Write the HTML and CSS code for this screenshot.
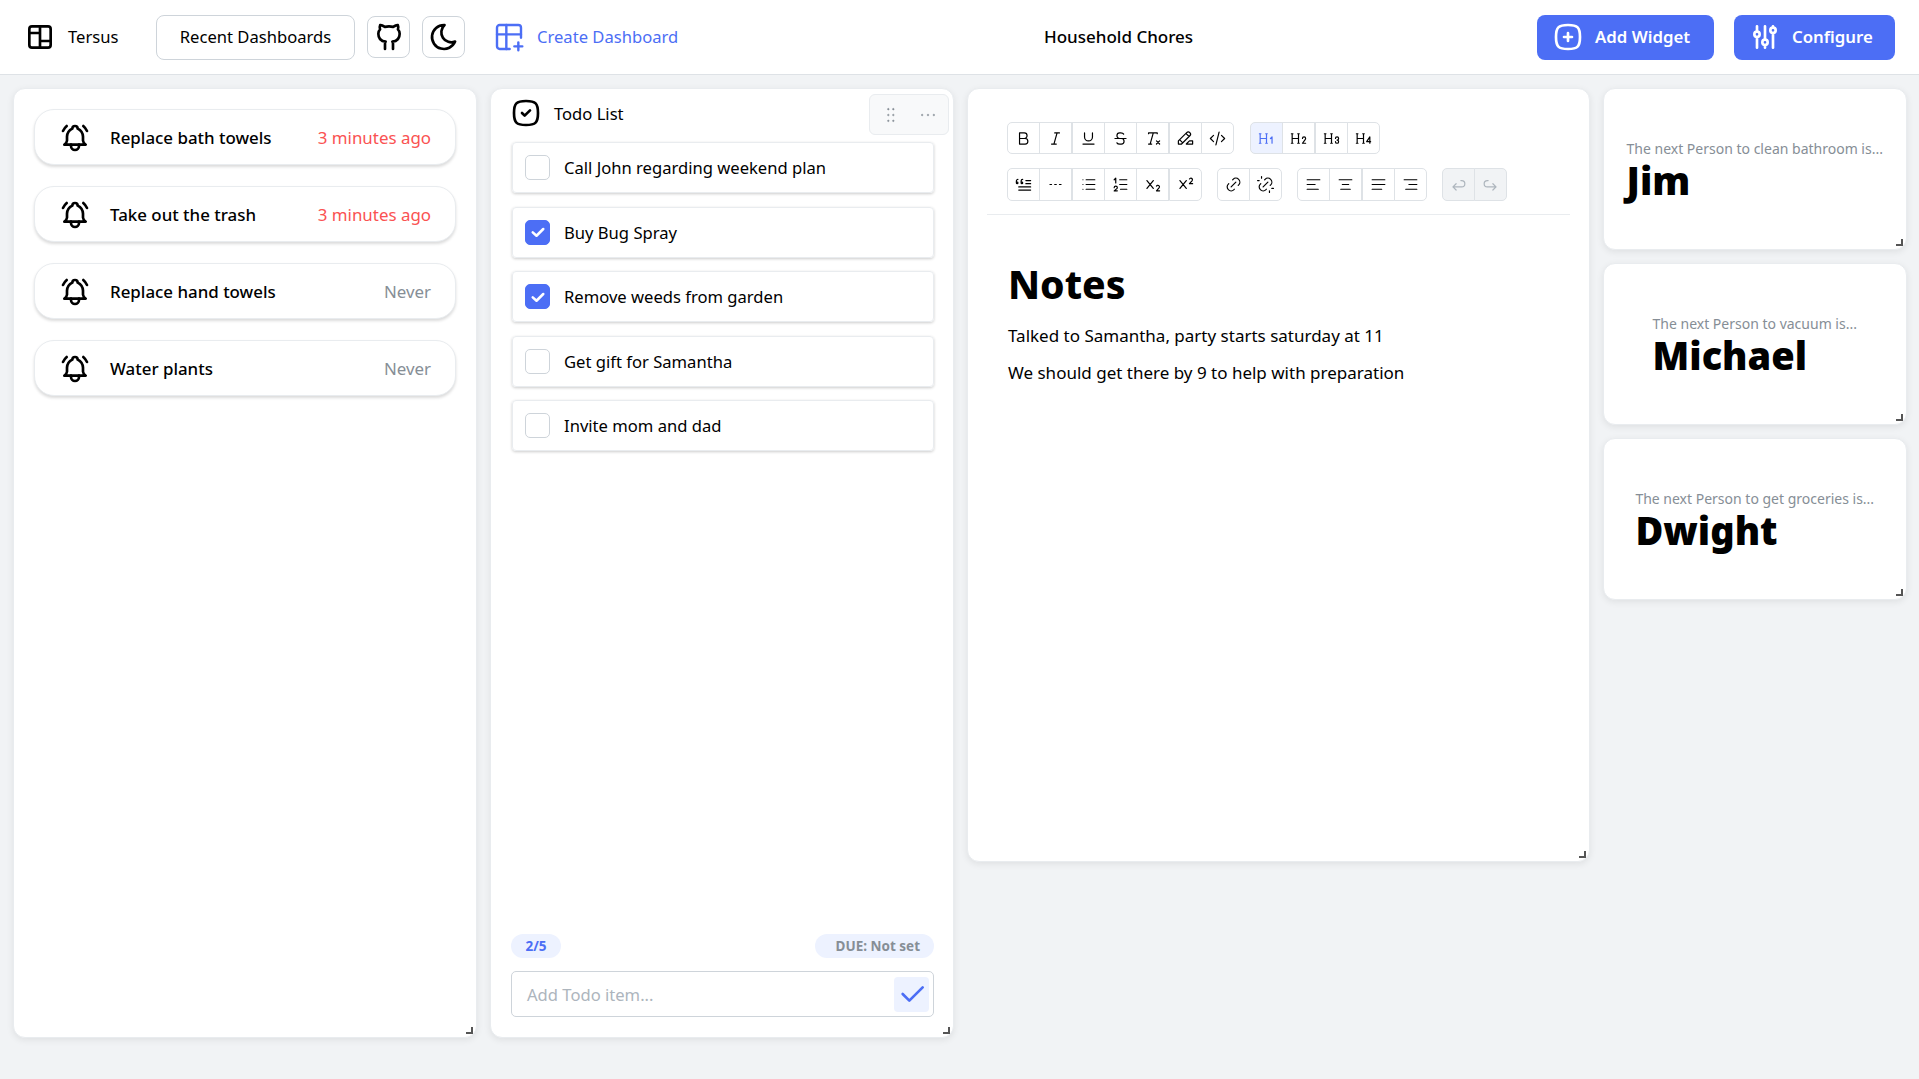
FILE: index.html
```html
<!DOCTYPE html>
<html lang="en">
<head>
<meta charset="utf-8">
<title>Household Chores</title>
<link rel="stylesheet" href="styles.css">
</head>
<body>
<svg class="sprite" aria-hidden="true">
  <defs>
    <symbol id="hrest" viewBox="0 0 24 24"><path d="M4 6v12M12 6v12M11 18h2M3 18h2M4 12h8M3 6h2M11 6h2"/></symbol>
    <symbol id="bell" viewBox="0 0 24 24"><path d="M10 5a2 2 0 0 1 4 0a7 7 0 0 1 4 6v3a4 4 0 0 0 2 3h-16a4 4 0 0 0 2 -3v-3a7 7 0 0 1 4 -6"/><path d="M9 17v1a3 3 0 0 0 6 0v-1"/><path d="M21 6.727a11.05 11.05 0 0 0 -2.794 -3.727"/><path d="M3 6.727a11.05 11.05 0 0 1 2.792 -3.727"/></symbol>
  </defs>
</svg>

<header class="topbar">
  <div class="brand">
    <svg class="ic ic-32" viewBox="0 0 24 24"><path d="M6 4h12a2 2 0 0 1 2 2v12a2 2 0 0 1 -2 2h-12a2 2 0 0 1 -2 -2v-12a2 2 0 0 1 2 -2z"/><path d="M4 9h8M12 15h8M12 4v16"/></svg>
    <span class="lift">Tersus</span>
  </div>
  <button class="btn-outline recent"><span class="lift">Recent Dashboards</span></button>
  <button class="btn-outline square"><svg class="ic ic-32" viewBox="0 0 24 24"><path d="M15 21v-3.5c0 -1 .1 -1.4 -.5 -2c2.8 -.3 5.5 -1.4 5.5 -6a4.6 4.6 0 0 0 -1.3 -3.2a4.2 4.2 0 0 0 -.1 -3.2s-1.1 -.3 -3.5 1.3a12.3 12.3 0 0 0 -6.2 0c-2.4 -1.6 -3.5 -1.3 -3.5 -1.3a4.2 4.2 0 0 0 -.1 3.2a4.6 4.6 0 0 0 -1.3 3.2c0 4.6 2.7 5.7 5.5 6c-.6 .6 -.6 1.2 -.5 2v3.5"/></svg></button>
  <button class="btn-outline square"><svg class="ic ic-32" viewBox="0 0 24 24"><path d="M12 3c.132 0 .263 0 .393 0a7.5 7.5 0 0 0 7.92 12.446a9 9 0 1 1 -8.313 -12.454z"/></svg></button>
  <a class="create">
    <svg class="ic ic-create" viewBox="0 0 24 24"><path d="M12.5 21h-7.5a2 2 0 0 1 -2 -2v-14a2 2 0 0 1 2 -2h14a2 2 0 0 1 2 2v7.5"/><path d="M3 10h18M10 3v18M16 19h6M19 16v6"/></svg>
    <span class="lift">Create Dashboard</span>
  </a>
  <div class="title">Household Chores</div>
  <div class="actions">
    <button class="btn-primary add"><svg class="ic ic-32" viewBox="0 0 24 24"><path d="M9 12h6M12 9v6"/><path d="M12 3c7.2 0 9 1.8 9 9s-1.8 9 -9 9s-9 -1.8 -9 -9s1.8 -9 9 -9z"/></svg><span class="lift">Add Widget</span></button>
    <button class="btn-primary configure"><svg class="ic ic-32" viewBox="0 0 24 24"><path d="M4 10a2 2 0 1 0 4 0a2 2 0 0 0 -4 0M6 4v4M6 12v8M10 16a2 2 0 1 0 4 0a2 2 0 0 0 -4 0M12 4v10M12 18v2M16 7a2 2 0 1 0 4 0a2 2 0 0 0 -4 0M18 4v1M18 9v11"/></svg><span class="lift">Configure</span></button>
  </div>
</header>

<main class="dashboard">
  <section class="panel panel-tall reminders">
    <div class="reminder"><svg class="ic ic-32"><use href="#bell"/></svg><span class="reminder-name">Replace bath towels</span><span class="when when-late">3 minutes ago</span></div>
    <div class="reminder"><svg class="ic ic-32"><use href="#bell"/></svg><span class="reminder-name">Take out the trash</span><span class="when when-late">3 minutes ago</span></div>
    <div class="reminder"><svg class="ic ic-32"><use href="#bell"/></svg><span class="reminder-name">Replace hand towels</span><span class="when">Never</span></div>
    <div class="reminder"><svg class="ic ic-32"><use href="#bell"/></svg><span class="reminder-name">Water plants</span><span class="when">Never</span></div>
    <i class="resize"></i>
  </section>

  <section class="panel panel-tall todo">
    <div class="widget-controls">
      <svg class="dots" viewBox="0 0 24 24"><path d="M9 5a1 1 0 1 0 2 0a1 1 0 1 0 -2 0M9 12a1 1 0 1 0 2 0a1 1 0 1 0 -2 0M9 19a1 1 0 1 0 2 0a1 1 0 1 0 -2 0M15 5a1 1 0 1 0 2 0a1 1 0 1 0 -2 0M15 12a1 1 0 1 0 2 0a1 1 0 1 0 -2 0M15 19a1 1 0 1 0 2 0a1 1 0 1 0 -2 0"/></svg>
      <svg class="dots" viewBox="0 0 24 24"><path d="M4 12a1 1 0 1 0 2 0a1 1 0 1 0 -2 0M11 12a1 1 0 1 0 2 0a1 1 0 1 0 -2 0M18 12a1 1 0 1 0 2 0a1 1 0 1 0 -2 0"/></svg>
    </div>
    <div class="todo-head">
      <svg class="ic ic-32" viewBox="0 0 24 24"><path d="M9 12l2 2l4 -4"/><path d="M12 3c7.2 0 9 1.8 9 9s-1.8 9 -9 9s-9 -1.8 -9 -9s1.8 -9 9 -9z"/></svg>
      <span>Todo List</span>
    </div>
    <ul class="todo-list">
      <li class="todo-item"><span class="check"></span>Call John regarding weekend plan</li>
      <li class="todo-item"><span class="check checked"><svg viewBox="0 0 24 24"><path d="M5 12.5l5 4.5l9 -9"/></svg></span>Buy Bug Spray</li>
      <li class="todo-item"><span class="check checked"><svg viewBox="0 0 24 24"><path d="M5 12.5l5 4.5l9 -9"/></svg></span>Remove weeds from garden</li>
      <li class="todo-item"><span class="check"></span>Get gift for Samantha</li>
      <li class="todo-item"><span class="check"></span>Invite mom and dad</li>
    </ul>
    <div class="todo-meta">
      <span class="badge badge-count">2/5</span>
      <span class="badge badge-due">DUE: Not set</span>
    </div>
    <div class="todo-input">
      <span class="placeholder">Add Todo item...</span>
      <span class="todo-submit"><svg class="ic ic-32" viewBox="0 0 24 24"><path d="M5 12l5 5l10 -10"/></svg></span>
    </div>
    <i class="resize"></i>
  </section>

  <section class="panel panel-notes">
    <div class="toolbar">
      <div class="tool-row">
        <div class="tool-group">
          <span class="tool"><svg class="ic" viewBox="0 0 24 24"><path d="M7 5h6a3.5 3.5 0 0 1 0 7h-6zM13 12h1a3.5 3.5 0 0 1 0 7h-7v-7"/></svg></span>
          <span class="tool"><svg class="ic" viewBox="0 0 24 24"><path d="M11 5l6 0M7 19l6 0M14 5l-4 14"/></svg></span>
          <span class="tool"><svg class="ic" viewBox="0 0 24 24"><path d="M7 5v5a5 5 0 0 0 10 0v-5M5 19h14"/></svg></span>
          <span class="tool"><svg class="ic" viewBox="0 0 24 24"><path d="M5 12l14 0M16 6.5a4 2 0 0 0 -4 -1.5h-1a3.5 3.5 0 0 0 0 7h2a3.5 3.5 0 0 1 0 7h-1.5a4 2 0 0 1 -4 -1.5"/></svg></span>
          <span class="tool"><svg class="ic" viewBox="0 0 24 24"><path d="M17 15l4 4m0 -4l-4 4M7 6v-1h11v1M7 19l4 0M13 5l-4 14"/></svg></span>
          <span class="tool"><svg class="ic" viewBox="0 0 24 24"><path d="M3 19h4l10.5 -10.5a2.828 2.828 0 1 0 -4 -4l-10.5 10.5v4M12.5 5.5l4 4M4.5 13.5l4 4M21 15v4h-8l4 -4z"/></svg></span>
          <span class="tool"><svg class="ic" viewBox="0 0 24 24"><path d="M7 8l-4 4l4 4M17 8l4 4l-4 4M14 4l-4 16"/></svg></span>
        </div>
        <div class="tool-group">
          <span class="tool tool-active"><svg class="ic" viewBox="0 0 24 24"><use href="#hrest"/><path d="M19 18v-8l-2 2"/></svg></span>
          <span class="tool"><svg class="ic" viewBox="0 0 24 24"><use href="#hrest"/><path d="M17 12a2 2 0 1 1 4 0c0 .591 -.417 1.318 -.816 1.858l-3.184 4.143l4 0"/></svg></span>
          <span class="tool"><svg class="ic" viewBox="0 0 24 24"><use href="#hrest"/><path d="M19 14a2 2 0 1 0 -2 -2M17 16a2 2 0 1 0 2 -2"/></svg></span>
          <span class="tool"><svg class="ic" viewBox="0 0 24 24"><use href="#hrest"/><path d="M20 18v-8l-4 6h5"/></svg></span>
        </div>
      </div>
      <div class="tool-row tool-row-tall">
        <div class="tool-group">
          <span class="tool"><svg class="ic" viewBox="0 0 24 24"><path d="M6 15h15M21 19h-15M15 11h6M21 7h-6M9 9h1a1 1 0 1 1 -1 1v-2.5a2 2 0 0 1 2 -2M3 9h1a1 1 0 1 1 -1 1v-2.5a2 2 0 0 1 2 -2"/></svg></span>
          <span class="tool"><svg class="ic" viewBox="0 0 24 24"><path d="M5 12h2M17 12h2M11 12h2"/></svg></span>
          <span class="tool"><svg class="ic" viewBox="0 0 24 24"><path d="M9 6l11 0M9 12l11 0M9 18l11 0M5 6l0 .01M5 12l0 .01M5 18l0 .01"/></svg></span>
          <span class="tool"><svg class="ic" viewBox="0 0 24 24"><path d="M11 6h9M11 12h9M12 18h8M4 16a2 2 0 1 1 4 0c0 .591 -.5 1 -1 1.5l-3 2.5h4M6 10v-6l-2 2"/></svg></span>
          <span class="tool"><svg class="ic" viewBox="0 0 24 24"><path d="M5 7l8 10m-8 0l8 -10M21 20h-4l3.5 -4a1.73 1.73 0 0 0 -3.5 -2"/></svg></span>
          <span class="tool"><svg class="ic" viewBox="0 0 24 24"><path d="M5 7l8 10m-8 0l8 -10M21 11h-4l3.5 -4a1.73 1.73 0 0 0 -3.5 -2"/></svg></span>
        </div>
        <div class="tool-group">
          <span class="tool"><svg class="ic" viewBox="0 0 24 24"><path d="M9 15l6 -6M11 6l.463 -.536a5 5 0 0 1 7.071 7.072l-.534 .464M13 18l-.397 .534a5.068 5.068 0 0 1 -7.127 0a4.972 4.972 0 0 1 0 -7.071l.524 -.463"/></svg></span>
          <span class="tool"><svg class="ic" viewBox="0 0 24 24"><path d="M17 22v-2M9 15l6 -6M11 6l.463 -.536a5 5 0 0 1 7.071 7.072l-.534 .463M13 18l-.397 .534a5.068 5.068 0 0 1 -7.127 0a4.972 4.972 0 0 1 0 -7.071l.524 -.463M20 17h2M2 7h2M7 2v2"/></svg></span>
        </div>
        <div class="tool-group">
          <span class="tool"><svg class="ic" viewBox="0 0 24 24"><path d="M4 6l16 0M4 12l10 0M4 18l14 0"/></svg></span>
          <span class="tool"><svg class="ic" viewBox="0 0 24 24"><path d="M4 6l16 0M8 12l8 0M6 18l12 0"/></svg></span>
          <span class="tool"><svg class="ic" viewBox="0 0 24 24"><path d="M4 6l16 0M4 12l16 0M4 18l12 0"/></svg></span>
          <span class="tool"><svg class="ic" viewBox="0 0 24 24"><path d="M4 6l16 0M10 12l10 0M6 18l14 0"/></svg></span>
        </div>
        <div class="tool-group">
          <span class="tool tool-disabled"><svg class="ic" viewBox="0 0 24 24"><path d="M9 11l-4 4l4 4m-4 -4h11a4 4 0 0 0 0 -8h-1"/></svg></span>
          <span class="tool tool-disabled"><svg class="ic" viewBox="0 0 24 24"><path d="M15 11l4 4l-4 4m4 -4h-11a4 4 0 0 1 0 -8h1"/></svg></span>
        </div>
      </div>
    </div>
    <article class="notes-body">
      <h1>Notes</h1>
      <p>Talked to Samantha, party starts saturday at 11</p>
      <p>We should get there by 9 to help with preparation</p>
    </article>
    <i class="resize"></i>
  </section>

  <div class="side-column">
    <section class="panel next-card"><div><p class="next-label">The next Person to clean bathroom is...</p><p class="next-name">Jim</p></div><i class="resize"></i></section>
    <section class="panel next-card"><div><p class="next-label">The next Person to vacuum is...</p><p class="next-name">Michael</p></div><i class="resize"></i></section>
    <section class="panel next-card"><div><p class="next-label">The next Person to get groceries is...</p><p class="next-name">Dwight</p></div><i class="resize"></i></section>
  </div>
</main>
</body>
</html>
```
FILE: styles.css
```css
* { box-sizing: border-box; }
html, body { height: 100%; }
body {
  margin: 0;
  background: #f1f3f5;
  color: #000;
  font-family: "Noto Sans", "Open Sans", sans-serif;
  font-size: 16.6px;
  overflow: hidden;
}
.sprite { position: absolute; width: 0; height: 0; }
button { font: inherit; cursor: pointer; }
p, h1, ul { margin: 0; padding: 0; }

.ic {
  width: 22px;
  height: 22px;
  fill: none;
  stroke: currentColor;
  stroke-width: 2;
  stroke-linecap: round;
  stroke-linejoin: round;
  flex: none;
}
.ic-32 { width: 32px; height: 32px; }
.lift { display: block; margin-bottom: 2px; }

/* Top bar */
.topbar {
  height: 75px;
  background: #fff;
  border-bottom: 1px solid #dee2e6;
  display: flex;
  align-items: center;
  padding: 0 24px;
  position: relative;
}
.brand { display: flex; align-items: center; gap: 12px; width: 132px; }
.btn-outline {
  background: #fff;
  color: #000;
  border: 1px solid #ced4da;
  border-radius: 8px;
  height: 44px;
}
.recent { width: 199px; height: 45px; padding: 0; }
.square { width: 43px; height: 42px; margin-left: 12px; padding: 0; display: flex; align-items: center; justify-content: center; }
.create {
  margin-left: 28px;
  display: flex;
  align-items: center;
  gap: 12px;
  color: #4c6ef5;
}
.ic-create { width: 32px; height: 32px; stroke-width: 1.8; }
.title {
  position: absolute;
  left: 1044px;
  top: 25px;
  font-size: 17px;
  font-weight: 500;
}
.actions { margin-left: auto; display: flex; gap: 20px; }
.btn-primary {
  height: 45px;
  border: 0;
  border-radius: 8px;
  background: #4c6ef5;
  color: #fff;
  font-size: 16.8px;
  font-weight: 600;
  display: flex;
  align-items: center;
  gap: 11px;
  padding: 0 0 0 15px;
}
.add { width: 177px; }
.configure { width: 161px; }

/* Grid */
.dashboard {
  display: grid;
  grid-template-columns: 464px 464px 622.5px 304.5px;
  column-gap: 13px;
  align-items: start;
  padding: 13px 0 0 13px;
}
.panel {
  background: #fff;
  border: 1px solid #e9ecef;
  border-radius: 12px;
  box-shadow: 0 2px 7px rgba(0, 0, 0, .08);
  position: relative;
}
.panel-tall { height: 950px; }
.resize {
  position: absolute;
  right: 3px;
  bottom: 3px;
  width: 7px;
  height: 7px;
  border-right: 2px solid #555;
  border-bottom: 2px solid #555;
}

/* Reminders */
.reminders { padding: 20px 20px; display: flex; flex-direction: column; gap: 21px; }
.reminder {
  height: 56px;
  border: 1px solid #e9ecef;
  border-radius: 20px;
  box-shadow: 0 2px 3px rgba(0, 0, 0, .14);
  display: flex;
  align-items: center;
  padding: 1px 24px 0 24px;
  background: #fff;
  font-size: 16.9px;
}
.reminder-name { margin-left: 19px; font-weight: 500; }
.when { margin-left: auto; color: #868e96; }
.when-late { color: #fa5252; }

/* Todo */
.todo { padding: 0 19px 0 21px; display: flex; flex-direction: column; }
.widget-controls {
  position: absolute;
  right: 4px;
  top: 5px;
  width: 80px;
  height: 41px;
  background: #f8f9fa;
  border: 1px solid #e9ecef;
  border-radius: 6px;
  display: flex;
  align-items: center;
  gap: 18px;
  padding-left: 10px;
}
.dots { width: 20px; height: 20px; fill: #868e96; stroke: #868e96; stroke-width: .6; }
.todo-head { display: flex; align-items: center; gap: 12px; height: 48px; margin: 0 0 5px -2px; }
.todo-list { list-style: none; display: flex; flex-direction: column; gap: 13.5px; }
.todo-item {
  height: 51px;
  border: 1px solid #e9ecef;
  border-radius: 4px;
  box-shadow: 0 1px 3px rgba(0, 0, 0, .2);
  display: flex;
  align-items: center;
  padding-left: 12px;
  gap: 14px;
}
.check {
  width: 25px;
  height: 25px;
  border: 1px solid #ced4da;
  border-radius: 5px;
  display: flex;
  align-items: center;
  justify-content: center;
}
.checked { background: #4c6ef5; border-color: #4c6ef5; }
.checked svg { width: 18px; height: 18px; fill: none; stroke: #fff; stroke-width: 3.4; stroke-linecap: round; stroke-linejoin: round; }
.todo-meta { margin: auto 0 0 -1px; display: flex; justify-content: space-between; }
.badge {
  height: 24px;
  border-radius: 12px;
  background: #edf2ff;
  font-size: 13.5px;
  font-weight: 700;
  display: flex;
  align-items: center;
}
.badge-count { width: 50px; justify-content: center; color: #4c6ef5; }
.badge-due { width: 119px; justify-content: flex-end; padding-right: 14px; color: #868e96; }
.todo-input {
  margin: 13px 0 20px -1px;
  height: 46px;
  border: 1px solid #ced4da;
  border-radius: 5px;
  display: flex;
  align-items: center;
  justify-content: space-between;
  padding: 0 4px 0 15px;
}
.placeholder { color: #adb5bd; }
.todo-submit {
  width: 35px;
  height: 35px;
  background: #edf2ff;
  border-radius: 4px;
  color: #4c6ef5;
  display: flex;
  align-items: center;
  justify-content: center;
}

/* Notes */
.panel-notes { height: 774px; padding: 0 19px; }
.toolbar {
  padding: 33px 0 13px 20px;
  border-bottom: 1px solid #e9ecef;
  display: flex;
  flex-direction: column;
  gap: 14px;
}
.tool-row { display: flex; gap: 16px; }
.tool-row-tall { gap: 15px; }
.tool-group { display: flex; }
.tool {
  width: 33px;
  height: 32px;
  margin-right: -.7px;
  border: 1px solid #dee2e6;
  display: flex;
  align-items: center;
  justify-content: center;
  background: #fff;
}
.tool-row-tall .tool { height: 33px; }
.tool .ic { width: 19px; height: 19px; stroke-width: 1.5; }
.tool:first-child { border-radius: 5px 0 0 5px; }
.tool:last-child { border-radius: 0 5px 5px 0; margin-right: 0; }
.tool-active { background: #edf2ff; color: #4c6ef5; }
.tool-disabled { background: #f1f3f5; color: #adb5bd; }
.notes-body { padding-left: 21px; font-size: 17px; }
.notes-body h1 { margin: 42px 0 6.8px; font-size: 39px; font-weight: 800; line-height: 1.4; }
.notes-body p { line-height: 36.5px; }

/* Next person */
.side-column { display: flex; flex-direction: column; gap: 13px; }
.next-card {
  height: 162px;
  display: flex;
  align-items: center;
  justify-content: center;
}
.next-label { color: #868e96; font-size: 14px; line-height: 20px; white-space: nowrap; }
.next-name { margin-top: 2.5px; font-size: 38px; font-weight: 900; line-height: 38px; }
```
